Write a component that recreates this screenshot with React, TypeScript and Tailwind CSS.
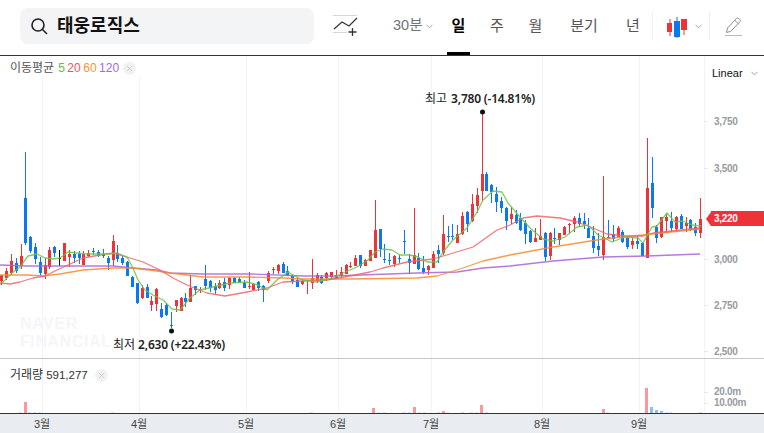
import { ChevronDown, X } from "lucide-react";

const font = "font-['Liberation_Sans','Noto_Sans_CJK_KR',sans-serif]";

type Candle = [number, number, number, number, number, "r" | "b" | "k"];

// x, high, body top, body bottom, low (all in page pixels)
const candles: Candle[] = [
    [1, 275, 275, 280, 284, "r"], [6, 268, 271, 277, 279, "r"], [11, 254, 261, 272, 274, "r"], [16, 258, 263, 270, 272, "b"],
    [21, 244, 256, 265, 268, "r"], [25, 152, 198, 242, 244, "b"], [30, 236, 237, 250, 252, "b"], [35, 243, 247, 258, 263, "b"],
    [40, 257, 262, 272, 276, "b"], [45, 258, 265, 273, 278, "r"], [49, 247, 250, 266, 268, "r"], [54, 246, 247, 252, 256, "b"],
    [59, 250, 258, 258, 265, "k"], [64, 243, 243, 260, 260, "r"], [69, 250, 254, 256, 266, "r"], [74, 251, 254, 257, 262, "b"],
    [79, 251, 254, 257, 263, "b"], [83, 251, 254, 264, 264, "r"], [88, 250, 253, 255, 256, "r"], [93, 248, 251, 251, 254, "b"],
    [98, 250, 252, 255, 256, "b"], [103, 249, 254, 255, 257, "b"], [108, 256, 258, 262, 269, "b"], [113, 235, 241, 259, 265, "r"],
    [117, 245, 253, 258, 261, "b"], [122, 256, 258, 262, 264, "b"], [127, 261, 262, 275, 275, "b"], [132, 276, 277, 286, 286, "b"],
    [137, 283, 283, 302, 303, "b"], [142, 285, 288, 297, 298, "r"], [147, 284, 287, 297, 297, "b"], [151, 296, 301, 304, 310, "r"],
    [156, 288, 289, 303, 310, "r"], [161, 303, 309, 316, 317, "b"], [166, 303, 305, 314, 315, "b"], [171, 312, 325, 325, 327, "b"],
    [176, 300, 300, 305, 311, "r"], [181, 297, 298, 310, 310, "r"], [185, 293, 298, 301, 306, "b"], [190, 275, 288, 301, 301, "r"],
    [195, 286, 286, 289, 294, "b"], [200, 287, 289, 289, 292, "r"], [205, 265, 279, 285, 289, "b"], [210, 280, 281, 287, 291, "b"],
    [215, 283, 286, 289, 293, "b"], [219, 280, 283, 287, 288, "r"], [224, 278, 282, 287, 290, "b"], [229, 277, 278, 284, 288, "r"],
    [234, 277, 278, 282, 282, "b"], [239, 277, 279, 282, 282, "b"], [244, 280, 283, 287, 287, "b"], [249, 272, 286, 286, 288, "r"],
    [253, 283, 284, 289, 289, "r"], [258, 281, 282, 287, 290, "b"], [263, 285, 286, 289, 301, "b"], [268, 271, 273, 280, 282, "r"],
    [273, 267, 269, 269, 273, "r"], [278, 264, 265, 270, 273, "r"], [283, 262, 264, 272, 272, "b"], [287, 266, 271, 275, 275, "b"],
    [292, 275, 276, 281, 283, "b"], [297, 278, 280, 286, 286, "b"], [302, 279, 281, 283, 284, "r"], [307, 280, 280, 280, 293, "r"],
    [312, 259, 278, 282, 288, "r"], [317, 273, 275, 280, 282, "r"], [321, 275, 277, 282, 283, "b"], [326, 272, 273, 277, 280, "r"],
    [331, 272, 272, 276, 278, "r"], [336, 270, 275, 277, 278, "r"], [341, 267, 272, 275, 277, "r"], [346, 264, 265, 273, 273, "r"],
    [350, 262, 266, 266, 267, "r"], [355, 255, 258, 265, 265, "r"], [360, 255, 255, 265, 267, "b"], [365, 259, 260, 265, 265, "r"],
    [370, 250, 250, 260, 260, "r"], [375, 200, 230, 257, 257, "r"], [380, 229, 229, 248, 256, "b"], [384, 244, 259, 259, 262, "b"],
    [389, 253, 260, 260, 264, "b"], [394, 255, 256, 263, 266, "r"], [399, 255, 258, 258, 262, "b"], [404, 230, 241, 241, 253, "b"],
    [409, 254, 259, 262, 273, "b"], [414, 208, 255, 263, 263, "r"], [418, 253, 258, 268, 269, "b"], [423, 256, 268, 271, 273, "b"],
    [428, 265, 266, 269, 274, "r"], [433, 251, 254, 267, 267, "r"], [438, 245, 250, 253, 262, "b"], [443, 215, 234, 252, 254, "r"],
    [448, 226, 236, 236, 241, "b"], [452, 224, 236, 236, 239, "b"], [457, 225, 234, 242, 242, "r"], [462, 212, 216, 233, 234, "r"],
    [467, 211, 212, 223, 231, "b"], [472, 194, 204, 220, 221, "r"], [477, 188, 195, 205, 212, "r"], [482, 113, 174, 190, 200, "r"],
    [486, 172, 174, 190, 190, "b"], [491, 184, 185, 191, 202, "b"], [496, 187, 194, 201, 211, "b"], [501, 197, 201, 207, 212, "b"],
    [506, 207, 208, 220, 229, "b"], [511, 207, 214, 218, 223, "r"], [516, 210, 215, 222, 223, "b"], [520, 213, 218, 229, 230, "b"],
    [525, 220, 223, 233, 243, "b"], [530, 230, 231, 241, 242, "b"], [535, 228, 238, 241, 241, "r"], [540, 219, 236, 239, 239, "r"],
    [545, 232, 233, 256, 260, "b"], [550, 232, 233, 255, 259, "r"], [554, 228, 238, 238, 243, "b"], [559, 233, 233, 239, 244, "r"],
    [564, 226, 227, 234, 234, "r"], [569, 223, 224, 224, 233, "r"], [574, 216, 218, 223, 231, "r"], [579, 213, 218, 223, 226, "b"],
    [584, 213, 221, 223, 228, "b"], [588, 218, 228, 237, 237, "b"], [593, 226, 236, 247, 252, "b"], [598, 233, 246, 249, 255, "b"],
    [603, 176, 237, 254, 259, "r"], [608, 220, 237, 237, 238, "b"], [613, 225, 234, 238, 241, "b"], [618, 226, 228, 236, 236, "r"],
    [622, 230, 232, 241, 242, "b"], [627, 236, 238, 246, 248, "b"], [632, 238, 241, 244, 248, "r"], [637, 236, 241, 243, 248, "b"],
    [642, 243, 243, 255, 255, "b"], [647, 138, 188, 257, 257, "r"], [652, 157, 183, 207, 217, "b"], [656, 225, 227, 237, 242, "b"],
    [661, 217, 217, 236, 237, "r"], [666, 213, 217, 220, 232, "r"], [671, 212, 221, 227, 231, "b"], [676, 216, 217, 228, 231, "r"],
    [681, 214, 216, 228, 228, "b"], [686, 217, 223, 225, 231, "r"], [690, 219, 220, 228, 230, "b"], [695, 223, 227, 232, 235, "b"],
    [700, 198, 219, 232, 237, "r"],
];

const ma5 = "0,284 5,280 12,273 20,267 28,256 37,254 45,258 53,259 60,258 68,252 77,253 87,254 100,254 110,254 117,253 127,257 133,268 138,280 145,290 153,295 163,300 172,309 180,310 190,298 200,290 213,287 230,283 247,282 258,285 267,290 277,280 288,272 302,280 317,282 333,278 343,273 357,267 368,260 375,252 383,249 392,250 400,255 410,255 418,257 427,262 437,262 443,252 453,240 467,228 477,212 483,200 493,191 502,192 508,203 520,217 530,228 543,239 553,241 565,237 577,227 588,225 598,235 612,242 625,237 638,238 643,243 652,227 657,226 667,213 675,222 683,221 692,225 701,226";
const ma20 = "0,283 10,284 20,282 33,278 45,276 57,270 68,265 83,258 100,255 113,253 127,257 143,262 160,270 173,278 187,285 207,293 225,296 247,292 267,288 283,282 303,281 327,280 350,276 370,272 383,268 407,262 433,259 450,254 473,247 483,240 497,230 510,225 523,218 537,216 560,218 577,222 593,228 607,234 627,236 643,236 653,233 700,228";
const ma60 = "0,275 27,275 43,276 60,274 83,270 113,268 133,268 157,271 170,273 203,277 247,277 283,278 303,279 350,279 417,278 437,276 463,268 483,261 510,255 553,247 603,239 643,235 700,229";
const ma120 = "0,265 27,266 67,266 113,266 133,268 157,270 170,273 203,274 253,274 303,276 333,276 417,273 457,272 483,268 510,266 553,261 603,257 647,256 700,254";

const gridX = [42, 139, 246, 338, 431, 542, 639, 704];
const priceTicks = [
    { y: 121, label: "3,750" },
    { y: 168, label: "3,500" },
    { y: 259, label: "3,000" },
    { y: 305, label: "2,750" },
    { y: 351, label: "2,500" },
];
const months = [
    { x: 42, label: "3월" }, { x: 139, label: "4월" }, { x: 246, label: "5월" }, { x: 338, label: "6월" },
    { x: 431, label: "7월" }, { x: 542, label: "8월" }, { x: 639, label: "9월" },
];

// x, top y, strong or pale
const volumes: [number, number, "r" | "b" | "pr" | "pb"][] = [
    [20, 412, "pr"], [25, 402, "r"], [29, 412, "pb"], [34, 412, "pb"], [39, 412, "pb"], [112, 412, "pr"], [311, 412, "pr"],
    [373, 408, "r"], [378, 412, "pb"], [384, 412, "pb"], [403, 412, "pr"], [409, 412, "pb"], [414, 407, "r"], [419, 412, "pb"],
    [424, 412, "pr"], [438, 412, "pr"], [443, 411, "r"], [447, 412, "pb"], [462, 412, "pr"], [471, 412, "pr"], [476, 412, "pb"],
    [481, 405, "r"], [486, 412, "pb"], [603, 409, "r"], [607, 412, "pb"], [646, 388, "r"], [651, 407, "b"], [656, 410, "b"],
    [661, 411, "b"], [666, 412, "pb"], [670, 412, "pb"], [700, 412, "pr"],
];
const volColor = { r: "#f79a9e", b: "#8cc0f5", pr: "#fbd3d4", pb: "#d3e5f8" };

function CloseChip({ className }: { className: string }) {
    return (
        <span className={`flex h-[13px] w-[13px] items-center justify-center rounded-full bg-[#f1f1f1] ${className}`}>
            <X size={9} strokeWidth={2} className="text-[#c4c4c4]" />
        </span>
    );
}

function Header() {
    return (
        <header className="flex h-[56px] shrink-0 items-center border-b border-[#333] pb-[3px] pl-[20px]">
            <div className="flex h-9 w-[294px] items-center rounded-lg bg-[#f3f4f6] pl-[10px]">
                <svg width="18" height="18" viewBox="0 0 18 18" fill="none" stroke="#222" strokeWidth="1.6">
                    <circle cx="8" cy="8" r="6" />
                    <path d="M12.5 12.5 17 17" />
                </svg>
                <span className="ml-[9px] text-[18px] font-bold text-[#111]">태웅로직스</span>
            </div>

            <svg className="ml-[19px]" width="25" height="24" viewBox="0 0 25 24" fill="none">
                <path d="M0 1.5H24M0 18.5H14" stroke="#d4d6da" strokeWidth="1" />
                <path d="M1 15 9 8l7 4 8-8" stroke="#333" strokeWidth="1.2" />
                <path d="M19.5 14v8M15.5 18h8" stroke="#333" strokeWidth="1.3" />
            </svg>

            <div className="ml-[35px] flex w-[54px] items-center text-[14.5px] text-[#6f7479]">
                30분
                <ChevronDown size={11} className="ml-[2px] text-[#9a9ea3]" />
            </div>
            <div className="relative w-[23px] text-center text-[15px] font-bold text-black">
                일
                <span className="absolute left-0 right-0 top-[37px] h-[3px] bg-black" />
            </div>
            <div className="ml-[7px] w-[40px] text-center text-[15px] text-[#555]">주</div>
            <div className="w-[37px] text-center text-[15px] text-[#555]">월</div>
            <div className="w-[60px] text-center text-[15px] text-[#555]">분기</div>
            <div className="w-[38px] text-center text-[15px] text-[#555]">년</div>
            <div className="h-7 w-px bg-[#eeeff1]" />

            <svg className="ml-[14px]" width="20" height="24" viewBox="0 0 20 24">
                <rect x="2.5" y="5" width="1" height="17" fill="#ee3338" />
                <rect x="0" y="9" width="5" height="9" fill="#ee3338" />
                <rect x="9.5" y="3" width="1" height="22" fill="#0a78f0" />
                <rect x="7" y="7" width="6" height="16" fill="#0a78f0" />
                <rect x="16.5" y="5" width="1" height="16" fill="#ee3338" />
                <rect x="14" y="5" width="6" height="11" fill="#ee3338" />
            </svg>
            <ChevronDown size={11} className="ml-[6px] text-[#9a9ea3]" />
            <div className="ml-[5px] h-7 w-px bg-[#eeeff1]" />

            <svg className="ml-[15px] mt-[1px]" width="18" height="20" viewBox="0 0 18 20" fill="none" stroke="#8a8e93" strokeWidth="1">
                <path d="M1.5 15.5 2.5 11 11.5 1.5a1.6 1.6 0 0 1 2.3 0l1 1a1.6 1.6 0 0 1 0 2.3L5.8 14.3Z" />
                <path d="M10 3.5l3.5 3.3" />
                <path d="M0 18.5H17" stroke="#b5b8bc" />
            </svg>
        </header>
    );
}

function PricePane() {
    return (
        <section className="relative h-[303px] shrink-0 overflow-hidden border-b border-[#c6c6c6]">
            <svg className="block" width="764" height="302" viewBox="0 56 764 302">
                {gridX.map((x) => (
                    <rect key={x} x={x} y="56" width="1" height="302" fill="#f1f3f6" />
                ))}
                {priceTicks.map((t) => (
                    <rect key={t.y} x="704" y={t.y} width="4" height="1" fill="#e6e8eb" />
                ))}
                <g shapeRendering="crispEdges">
                    {candles.map(([x, hi, top, bot, lo, c]) => {
                        const color = c === "r" ? "#ee3338" : c === "b" ? "#0a78f0" : "#111111";
                        return (
                            <g key={x} fill={color}>
                                <rect x={x} y={hi} width="1" height={lo - hi + 1} />
                                <rect x={x - 1} y={top} width="3" height={bot - top + 1} />
                            </g>
                        );
                    })}
                </g>
                <g fill="none" strokeLinejoin="round" strokeOpacity="0.85">
                    <polyline points={ma120} stroke="#a863d6" strokeWidth="1.3" />
                    <polyline points={ma60} stroke="#f7892a" strokeWidth="1.3" />
                    <polyline points={ma20} stroke="#f0636a" strokeWidth="1.3" />
                    <polyline points={ma5} stroke="#6cc24a" strokeWidth="1.3" />
                </g>
                <circle cx="482.5" cy="112" r="2.5" fill="#111" />
                <circle cx="171.5" cy="331" r="2.5" fill="#111" />
            </svg>

            <div className="absolute left-0 top-0 flex h-[20px] w-[140px] items-center bg-white pl-[10px] pt-[4px] text-[12px] text-[#555]">
                이동평균
                <span className="ml-[4px] text-[#5cc23a]">5</span>
                <span className="ml-[2.5px] text-[#f5525a]">20</span>
                <span className="ml-[2.5px] text-[#f79332]">60</span>
                <span className="ml-[2.5px] text-[#a868e0]">120</span>
                <CloseChip className="ml-[4px]" />
            </div>

            <div className="absolute left-[712px] top-[9px] flex items-center text-[11px] text-[#111]">
                Linear
                <ChevronDown size={11} className="ml-[6px] text-[#999]" />
            </div>

            {priceTicks.map((t) => (
                <span key={t.y} className="absolute left-[714px] text-[10px] font-bold leading-3 tracking-[-0.3px] text-[#969ba1]" style={{ top: t.y - 61 }}>
                    {t.label}
                </span>
            ))}

            <div className="absolute left-[706px] top-[155px] flex h-[15px] items-center">
                <span className="h-0 w-0 border-y-[7.5px] border-r-[5px] border-y-transparent border-r-[#ee3338]" />
                <span className="flex h-[15px] w-[53px] items-center bg-[#ee3338] pl-[3px] text-[10px] font-bold tracking-[-0.3px] text-white">3,220</span>
            </div>

            <div className="absolute left-[425px] top-[35px] flex items-baseline whitespace-nowrap text-[12px] leading-4 text-[#222]">
                최고
                <span className="ml-[4px] font-['Noto_Sans',sans-serif] text-[12px] font-semibold tracking-[-0.2px]">3,780 (-14.81%)</span>
            </div>
            <div className="absolute left-[113px] top-[281px] flex items-baseline whitespace-nowrap text-[12px] leading-4 text-[#222]">
                최저
                <span className="ml-[3px] font-['Noto_Sans',sans-serif] text-[12px] font-semibold tracking-[-0.2px]">2,630 (+22.43%)</span>
            </div>

            <div className="absolute left-[20px] top-[259px] text-[16px] font-bold leading-[18px] tracking-[0.6px] text-[#f5f6f8]">
                <div>NAVER</div>
                <div>FINANCIAL</div>
            </div>
        </section>
    );
}

function VolumePane() {
    return (
        <section className="relative h-[54px] shrink-0">
            <svg className="block" width="764" height="54" viewBox="0 359 764 54">
                {gridX.map((x) => (
                    <rect key={x} x={x} y="359" width="1" height="54" fill="#f1f3f6" />
                ))}
                <rect x="704" y="392" width="4" height="1" fill="#e6e8eb" />
                <rect x="704" y="403" width="4" height="1" fill="#e6e8eb" />
                <g shapeRendering="crispEdges">
                    {volumes.map(([x, y, c]) => (
                        <rect key={x} x={x - 1} y={y} width="3" height={413 - y} fill={volColor[c]} />
                    ))}
                </g>
            </svg>
            <div className="absolute left-[10px] top-[8px] flex items-center text-[12px] leading-4 text-[#333]">
                거래량
                <span className="ml-[3px] text-[11.5px]">591,277</span>
                <CloseChip className="ml-[7px]" />
            </div>
            <span className="absolute left-[714px] top-[27px] text-[10px] font-bold leading-3 tracking-[-0.3px] text-[#969ba1]">20.0m</span>
            <span className="absolute left-[714px] top-[38px] text-[10px] font-bold leading-3 tracking-[-0.3px] text-[#969ba1]">10.00m</span>
        </section>
    );
}

function DateAxis() {
    return (
        <footer className="relative h-[20px] shrink-0 border-t border-[#333] bg-[#e9ecf0]">
            {months.map((m) => (
                <span key={m.x} className="absolute top-[2px] w-8 text-center text-[11px] leading-4 text-[#444]" style={{ left: m.x - 16 }}>
                    {m.label}
                </span>
            ))}
        </footer>
    );
}

export default function App() {
    return (
        <div className={`flex h-[433px] w-[764px] flex-col overflow-hidden bg-white ${font}`}>
            <Header />
            <PricePane />
            <VolumePane />
            <DateAxis />
        </div>
    );
}
